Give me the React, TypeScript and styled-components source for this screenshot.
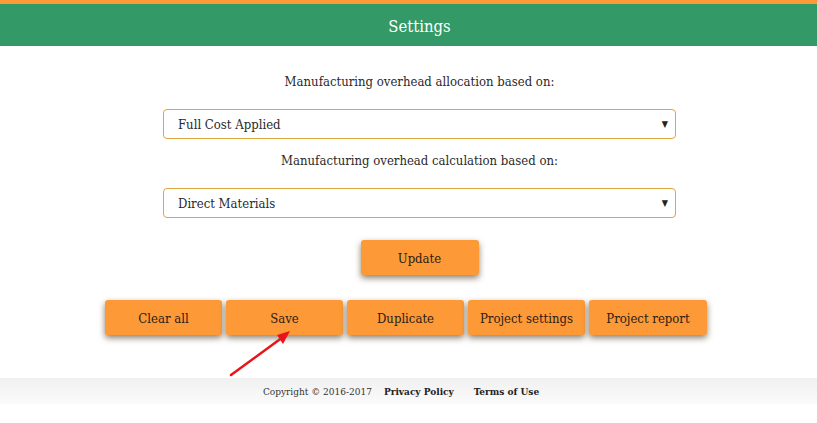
import React from "react";
import styled, { createGlobalStyle } from "styled-components";

const Global = createGlobalStyle`
  html, body { margin: 0; padding: 0; background: #ffffff; }
  body { font-family: "DejaVu Serif", "Liberation Serif", serif; font-stretch: condensed; color: #333; }
`;

const Page = styled.div`
  position: relative;
  width: 817px;
  height: 423px;
  overflow: hidden;
`;

const Header = styled.header`
  box-sizing: border-box;
  border-top: 4px solid #fd9a37;
  height: 46px;
  padding-top: 3px;
  background: #339966;
  display: flex;
  align-items: center;
  justify-content: center;
  padding-left: 22px;
  color: #ffffff;
  font-size: 16.5px;
`;

const Content = styled.main`
  display: flex;
  flex-direction: column;
  align-items: center;
  padding-left: 22px;
`;

const Label = styled.div<{ $top: number }>`
  margin-top: ${(p) => p.$top}px;
  line-height: 20px;
  font-size: 13px;
  color: #2a2a2a;
`;

const SelectBox = styled.div`
  margin-top: 17px;
  box-sizing: border-box;
  width: 513px;
  height: 30px;
  border: 1px solid #dfa63f;
  border-radius: 4px;
  display: flex;
  align-items: center;
  justify-content: space-between;
  padding: 0 7px 0 14px;
  font-size: 13px;
  color: #2a2a2a;
`;

const Caret = styled.span`
  font-size: 9px;
  color: #222;
`;

const Button = styled.button<{ $w: number }>`
  box-sizing: border-box;
  width: ${(p) => p.$w}px;
  height: 35px;
  padding-top: 2px;
  border: none;
  border-radius: 3px;
  background: #fd9a37;
  color: #2b2015;
  font-family: inherit;
  font-stretch: condensed;
  font-size: 13px;
  box-shadow: 0 3px 6px rgba(60, 40, 10, 0.6);
  cursor: pointer;
`;

const UpdateWrap = styled.div`
  margin-top: 22px;
`;

const Row = styled.div`
  margin-top: 25px;
  display: flex;
  justify-content: center;
  gap: 4px;
  padding-right: 5px;
`;

const Footer = styled.footer`
  margin-top: 43px;
  height: 26px;
  background: linear-gradient(#f0f0f0, #fbfbfb);
  display: flex;
  align-items: center;
  justify-content: center;
  gap: 12px;
  padding-right: 15px;
  font-size: 10px;
  color: #333;
`;

const FooterLink = styled.a<{ $gap?: number }>`
  font-weight: bold;
  color: #222;
  text-decoration: none;
  margin-left: ${(p) => p.$gap ?? 0}px;
`;

const Arrow = styled.svg`
  position: absolute;
  left: 225px;
  top: 325px;
`;

export default function App() {
  return (
    <Page>
      <Global />
      <Header>Settings</Header>
      <Content>
        <Label $top={26}>Manufacturing overhead allocation based on:</Label>
        <SelectBox>
          <span>Full Cost Applied</span>
          <Caret>▼</Caret>
        </SelectBox>
        <Label $top={12}>Manufacturing overhead calculation based on:</Label>
        <SelectBox>
          <span>Direct Materials</span>
          <Caret>▼</Caret>
        </SelectBox>
        <UpdateWrap>
          <Button $w={118}>Update</Button>
        </UpdateWrap>
      </Content>
      <Row>
        <Button $w={117}>Clear all</Button>
        <Button $w={117}>Save</Button>
        <Button $w={117}>Duplicate</Button>
        <Button $w={117}>Project settings</Button>
        <Button $w={118}>Project report</Button>
      </Row>
      <Footer>
        <span>Copyright © 2016-2017</span>
        <FooterLink href="#">Privacy Policy</FooterLink>
        <FooterLink href="#" $gap={8}>Terms of Use</FooterLink>
      </Footer>
      <Arrow width="70" height="56" viewBox="0 0 70 56">
        <line x1="6" y1="50" x2="58" y2="12" stroke="#e8141a" strokeWidth="2.5" strokeLinecap="round" />
        <polygon points="65,6 52,10 58,19" fill="#e8141a" />
      </Arrow>
    </Page>
  );
}
